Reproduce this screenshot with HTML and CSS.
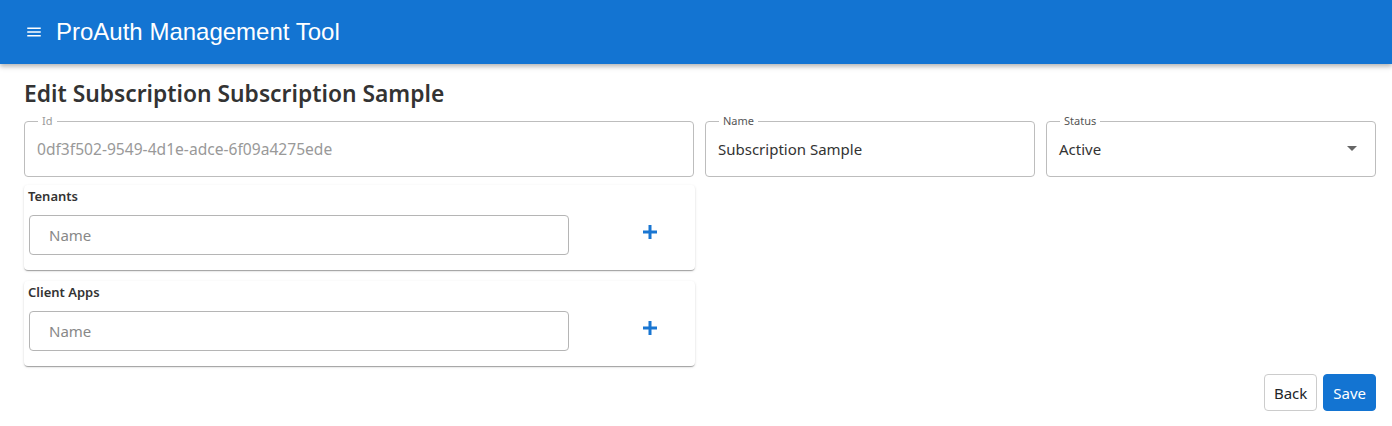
FILE: index.html
```html
<!DOCTYPE html>
<html lang="en">
<head>
    <meta charset="UTF-8">
    <meta name="viewport" content="width=device-width, initial-scale=1.0">
    <title>ProAuth Management Tool</title>
    <link rel="stylesheet" href="styles.css">
</head>
<body>

    <header class="app-bar">
        <button class="menu-btn" aria-label="menu">
            <svg width="18" height="18" viewBox="0 0 24 24"><path d="M3 18h18v-2H3v2zm0-5h18v-2H3v2zm0-7v2h18V6H3z" fill="#fff"/></svg>
        </button>
        <span class="app-title">ProAuth Management Tool</span>
    </header>

    <main class="page">
        <h1 class="page-title">Edit Subscription Subscription Sample</h1>

        <div class="field-row">
            <fieldset class="field field-id">
                <legend>Id</legend>
                <input type="text" value="0df3f502-9549-4d1e-adce-6f09a4275ede" disabled>
            </fieldset>
            <fieldset class="field">
                <legend>Name</legend>
                <input type="text" value="Subscription Sample">
            </fieldset>
            <fieldset class="field field-select">
                <legend>Status</legend>
                <span class="select-value">Active</span>
                <span class="select-arrow"></span>
            </fieldset>
        </div>

        <section class="card">
            <h2 class="card-title">Tenants</h2>
            <div class="card-row">
                <input class="plain-input" type="text" placeholder="Name">
                <button class="add-btn" aria-label="add">
                    <svg width="14" height="14" viewBox="0 0 14 14"><path d="M7 0v14M0 7h14" stroke="#1976d2" stroke-width="3"/></svg>
                </button>
            </div>
        </section>

        <section class="card">
            <h2 class="card-title">Client Apps</h2>
            <div class="card-row">
                <input class="plain-input" type="text" placeholder="Name">
                <button class="add-btn" aria-label="add">
                    <svg width="14" height="14" viewBox="0 0 14 14"><path d="M7 0v14M0 7h14" stroke="#1976d2" stroke-width="3"/></svg>
                </button>
            </div>
        </section>

        <div class="actions">
            <button class="btn btn-back">Back</button>
            <button class="btn btn-save">Save</button>
        </div>
    </main>

</body>
</html>
```

FILE: styles.css
```css
body {
    margin: 0;
    font-family: "Segoe UI", "Noto Sans", sans-serif;
    background-color: #fff;
    color: #212529;
}

.app-bar {
    height: 64px;
    background-color: #1374d2;
    display: flex;
    align-items: center;
    padding-left: 24px;
    box-shadow: 0 2px 4px rgba(0, 0, 0, 0.2), 0 4px 5px rgba(0, 0, 0, 0.1);
    position: relative;
}

.menu-btn {
    background: none;
    border: none;
    padding: 0;
    width: 20px;
    height: 20px;
    display: flex;
    align-items: center;
    justify-content: center;
    margin-right: 12px;
}

.app-title {
    font-family: "Liberation Sans", Arial, sans-serif;
    font-size: 24px;
    color: #fff;
}

.page {
    padding: 14px 16px 0 24px;
}

.page-title {
    margin: 0 0 9px 0;
    font-size: 22.8px;
    font-weight: 600;
    color: #333;
    line-height: 32px;
}

.field-row {
    display: flex;
    gap: 11px;
}

.field {
    margin: 0;
    padding: 0 12px;
    box-sizing: border-box;
    border: 1px solid #bdbdbd;
    border-radius: 4px;
    width: 330px;
    display: flex;
    align-items: center;
    position: relative;
    top: -4px;
    height: 62px;
}

.field-id {
    flex: 1;
}

.field legend {
    font-size: 11px;
    color: #555;
    padding: 0 4px;
    margin-left: 1px;
    line-height: 12px;
}

.field-id legend {
    color: #999;
}

.field input {
    border: none;
    outline: none;
    background: none;
    font: inherit;
    font-size: 15px;
    color: #333;
    width: 100%;
    padding: 0;
    margin-top: -5px;
}

.field input:disabled {
    color: #999;
}

.field-id input {
    font-size: 15.6px;
}

.field-select {
    justify-content: space-between;
}

.select-value {
    font-size: 15px;
    color: #333;
    margin-top: -5px;
}

.select-arrow {
    width: 0;
    height: 0;
    border-left: 5px solid transparent;
    border-right: 5px solid transparent;
    border-top: 5px solid #666;
    margin-right: 6px;
    margin-top: -7px;
}

.card {
    width: 671px;
    height: 85px;
    box-sizing: border-box;
    margin-top: 4px;
    margin-bottom: 11px;
    padding: 3px 4px 0 4px;
    border-radius: 4px;
    background: #fff;
    box-shadow: 0 2px 1px -1px rgba(0, 0, 0, 0.2), 0 1px 1px 0 rgba(0, 0, 0, 0.14), 0 1px 3px 0 rgba(0, 0, 0, 0.12);
}

.card + .card {
    margin-top: 0;
}

.card-title {
    margin: 0;
    font-size: 13px;
    font-weight: 600;
    color: #333;
    line-height: 16px;
}

.card-row {
    display: flex;
    align-items: center;
    margin-top: 11px;
}

.plain-input {
    width: 540px;
    height: 40px;
    box-sizing: border-box;
    margin-left: 1px;
    border: 1px solid #b5b5b5;
    border-radius: 4px;
    padding: 0 19px;
    font: inherit;
    font-size: 15px;
    color: #333;
    outline: none;
}

.plain-input::placeholder {
    color: #888;
}

.add-btn {
    background: none;
    border: none;
    padding: 0;
    margin-left: 74px;
    margin-top: -7px;
    width: 14px;
    height: 14px;
    cursor: pointer;
    display: flex;
}

.actions {
    display: flex;
    justify-content: flex-end;
    gap: 6px;
    margin-top: -3px;
}

.btn {
    height: 37px;
    padding: 0 9px;
    font: inherit;
    font-size: 15px;
    border-radius: 4px;
    cursor: pointer;
}

.btn-back {
    background: #fff;
    color: #212529;
    border: 1px solid #ccc;
}

.btn-save {
    background: #1374d2;
    color: #fff;
    border: 1px solid #1374d2;
}
```
